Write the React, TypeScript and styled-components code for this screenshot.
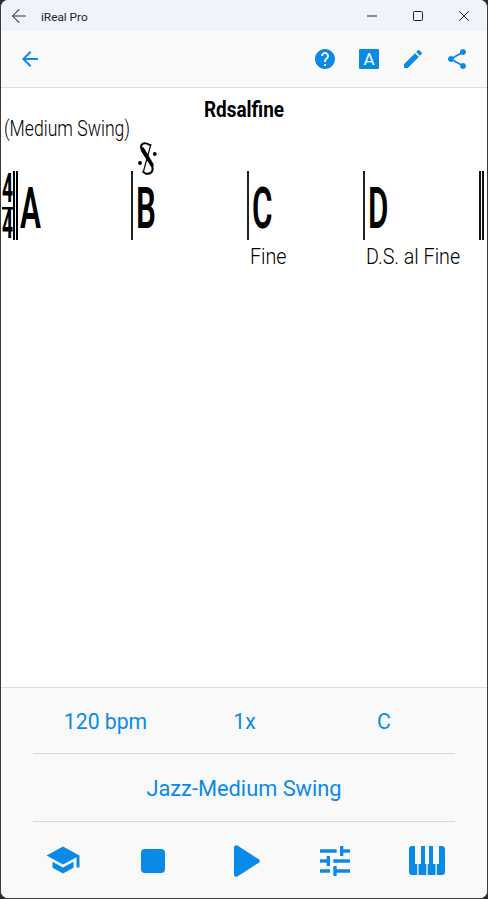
import { createGlobalStyle, styled } from "styled-components";
import { ArrowLeft } from "lucide-react";

const blue = "#0a8ae8";

const GlobalStyle = createGlobalStyle`
  html, body {
    margin: 0;
    height: 100%;
    background: #2b2b2b;
    font-family: Roboto, "Liberation Sans", sans-serif;
  }
`;

const Icon = ({ d, size = 24, className }: { d: string; size?: number; className?: string }) => (
  <svg className={className} width={size} height={size} viewBox="0 0 24 24" fill={blue}>
    <path d={d} />
  </svg>
);

const icons = {
  back: "M20 11H7.83l5.59-5.59L12 4l-8 8 8 8 1.41-1.41L7.83 13H20v-2z",
  help: "M12 2C6.48 2 2 6.48 2 12s4.48 10 10 10 10-4.48 10-10S17.52 2 12 2zm1 17h-2v-2h2v2zm2.07-7.75l-.9.92C13.45 12.9 13 13.5 13 15h-2v-.5c0-1.1.45-2.1 1.17-2.83l1.24-1.26c.37-.36.59-.86.59-1.41 0-1.1-.9-2-2-2s-2 .9-2 2H8c0-2.21 1.79-4 4-4s4 1.79 4 4c0 .88-.36 1.68-.93 2.25z",
  edit: "M3 17.25V21h3.75L17.81 9.94l-3.75-3.75L3 17.25zM20.71 7.04c.39-.39.39-1.02 0-1.41l-2.34-2.34c-.39-.39-1.02-.39-1.41 0l-1.83 1.83 3.75 3.75 1.83-1.83z",
  share: "M18 16.08c-.76 0-1.44.3-1.96.77L8.91 12.7c.05-.23.09-.46.09-.7s-.04-.47-.09-.7l7.05-4.11c.54.5 1.25.81 2.04.81 1.66 0 3-1.34 3-3s-1.34-3-3-3-3 1.34-3 3c0 .24.04.47.09.7L8.04 9.81C7.5 9.31 6.79 9 6 9c-1.66 0-3 1.34-3 3s1.34 3 3 3c.79 0 1.5-.31 2.04-.81l7.12 4.16c-.05.21-.08.43-.08.65 0 1.61 1.31 2.92 2.92 2.92s2.92-1.31 2.92-2.92-1.31-2.92-2.92-2.92z",
  school: "M5 13.18v4L12 21l7-3.82v-4L12 17l-7-3.82zM12 3L1 9l11 6 9-4.91V17h2V9L12 3z",
  tune: "M3 17v2h6v-2H3zM3 5v2h10V5H3zm10 16v-2h8v-2h-8v-2h-2v6h2zM7 9v2H3v2h4v2h2V9H7zm14 4v-2H11v2h10zm-6-4h2V7h4V5h-4V3h-2v6z",
};

export default function App() {
  return (
    <>
      <GlobalStyle />
      <Window>
        <TitleBar>
          <TitleLeft>
            <ArrowLeft size={22} strokeWidth={1.1} color="#333" />
            <TitleText>iReal Pro</TitleText>
          </TitleLeft>
          <WindowControls>
            <WinButton>
              <svg width="10" height="10" viewBox="0 0 10 10">
                <path d="M0 5h10" stroke="#222" />
              </svg>
            </WinButton>
            <WinButton>
              <svg width="10" height="10" viewBox="0 0 10 10">
                <rect x="0.5" y="0.5" width="9" height="9" rx="1" fill="none" stroke="#222" />
              </svg>
            </WinButton>
            <WinButton>
              <svg width="10" height="10" viewBox="0 0 10 10">
                <path d="M0 0l10 10M10 0L0 10" stroke="#222" />
              </svg>
            </WinButton>
          </WindowControls>
        </TitleBar>

        <Toolbar>
          <Icon d={icons.back} />
          <ToolbarActions>
            <Icon d={icons.help} />
            <LetterBadge>A</LetterBadge>
            <Icon d={icons.edit} />
            <Icon d={icons.share} />
          </ToolbarActions>
        </Toolbar>

        <Score>
          <SongTitle>
            <Narrow $scale={0.86}>Rdsalfine</Narrow>
          </SongTitle>
          <StyleName>
            <Narrow $scale={0.8}>(Medium Swing)</Narrow>
          </StyleName>
          <Staff>
            <TimeSignature>
              <span>4</span>
              <span>4</span>
            </TimeSignature>
            <Measure $double>
              <MeasureBar $double>
                <Chord>A</Chord>
              </MeasureBar>
            </Measure>
            <Measure>
              <MeasureBar>
                <Segno viewBox="0 0 19 33">
                  <path
                    d="M12 3.500C10 1 5 .5 3.500 3 2 6 4 9 6 12L13 22C15 25.500 15.500 29 12.500 31 9.500 32.500 6 32 5 29"
                    fill="none"
                    stroke="#000"
                    strokeWidth="2"
                  />
                  <path d="M4.500 7L14 23" stroke="#000" strokeWidth="3.500" strokeLinecap="round" />
                  <path d="M13 2L5 31" stroke="#000" strokeWidth="1.200" />
                  <circle cx="16.800" cy="12" r="1.900" />
                  <circle cx="2" cy="21" r="1.900" />
                </Segno>
                <Chord>B</Chord>
              </MeasureBar>
            </Measure>
            <Measure>
              <MeasureBar>
                <Chord>C</Chord>
              </MeasureBar>
              <BarNote>
                <Narrow $scale={0.875}>Fine</Narrow>
              </BarNote>
            </Measure>
            <Measure>
              <MeasureBar>
                <Chord>D</Chord>
              </MeasureBar>
              <BarNote>
                <Narrow $scale={0.875}>D.S. al Fine</Narrow>
              </BarNote>
            </Measure>
            <EndBar />
          </Staff>
        </Score>

        <Panel>
          <SettingsRow>
            <SettingCell>120 bpm</SettingCell>
            <SettingCell>1x</SettingCell>
            <KeyCell>C</KeyCell>
          </SettingsRow>
          <StyleRow>Jazz-Medium Swing</StyleRow>
          <Transport>
            <SchoolIcon d={icons.school} size={36} />
            <StopButton />
            <PlayIcon width="26" height="32" viewBox="0 0 26 32" fill={blue}>
              <path d="M0 2.5C0 .6 1.8-.4 3.4.6l21.4 13.6c1.3.8 1.3 2.8 0 3.6L3.4 31.4C1.8 32.4 0 31.4 0 29.5z" />
            </PlayIcon>
            <TuneIcon d={icons.tune} size={40} />
            <svg width="36" height="29" viewBox="0 0 36 29" fill={blue}>
              <path d="M3 0h3v18h2.2V29H3c-1.7 0-3-1.3-3-3V3c0-1.700 1.300-3 3-3zM9.500 29V18H12V0h4v18h1.300V29zM18.700 29V18H20V0h4v18h2.500V29zM27.800 29V18H30V0h3c1.700 0 3 1.300 3 3v23c0 1.700-1.300 3-3 3z" />
            </svg>
          </Transport>
        </Panel>
      </Window>
    </>
  );
}

const Window = styled.div`
  box-sizing: border-box;
  width: 488px;
  height: 899px;
  border: solid #3a3a3a;
  border-width: 0 1px 1px;
  border-radius: 8px;
  overflow: hidden;
  display: flex;
  flex-direction: column;
  background: #fff;
`;

const TitleBar = styled.div`
  height: 31px;
  flex: none;
  display: flex;
  align-items: center;
  justify-content: space-between;
  background: #eff4fb;
`;

const TitleLeft = styled.div`
  display: flex;
  align-items: center;
  gap: 11px;
  padding-left: 7px;
`;

const TitleText = styled.span`
  font-size: 11.8px;
  padding-top: 2px;
  color: #222;
`;

const WindowControls = styled.div`
  display: flex;
`;

const WinButton = styled.div`
  width: 46px;
  height: 30px;
  display: flex;
  align-items: center;
  justify-content: center;
`;

const Toolbar = styled.div`
  height: 57px;
  flex: none;
  box-sizing: border-box;
  display: flex;
  align-items: center;
  justify-content: space-between;
  padding: 0 18px 0 17px;
  background: #fafafa;
  border-bottom: 1px solid #dedede;
`;

const ToolbarActions = styled.div`
  display: flex;
  align-items: center;
  gap: 20px;
`;

const LetterBadge = styled.div`
  width: 20px;
  height: 20px;
  margin: 0 2px;
  border-radius: 1px;
  background: ${blue};
  color: #fff;
  font-size: 17px;
  line-height: 21px;
  text-align: center;
`;

const Score = styled.div`
  flex: 1;
  color: #000;
  background: #fff;
  padding-top: 10px;
`;

const Narrow = styled.span<{ $scale: number }>`
  display: inline-block;
  white-space: nowrap;
  transform: scaleX(${(p) => p.$scale});
  transform-origin: left center;
`;

const SongTitle = styled.div`
  height: 24px;
  padding-left: 203px;
  font-size: 22px;
  font-weight: 700;
  line-height: 24px;
`;

const StyleName = styled.div`
  height: 26px;
  margin-top: -6px;
  padding-left: 3px;
  font-size: 22px;
  font-weight: 300;
  line-height: 26px;
`;

const Staff = styled.div`
  display: flex;
  align-items: flex-start;
  margin-top: 29px;
  padding-left: 1px;
`;

const TimeSignature = styled.div`
  box-sizing: border-box;
  width: 11px;
  height: 69px;
  padding-top: 3px;
  display: flex;
  flex-direction: column;
  justify-content: space-between;
  font-size: 40px;
  font-weight: 700;
  line-height: 30px;
  background: linear-gradient(#000, #000) 0 36px / 100% 2.5px no-repeat;

  span {
    display: block;
    transform: scaleX(0.48);
    transform-origin: left center;
  }
`;

const Measure = styled.div<{ $double?: boolean }>`
  width: ${(p) => (p.$double ? "118px" : "116px")};
`;

const MeasureBar = styled.div<{ $double?: boolean }>`
  position: relative;
  box-sizing: border-box;
  height: 69px;
  padding-left: ${(p) => (p.$double ? "2px" : "3px")};
  border-left: ${(p) => (p.$double ? "5px double #000" : "2px solid #222")};
`;

const Chord = styled.div`
  font-size: 58px;
  font-weight: 600;
  line-height: 75px;
  transform: scaleX(0.54);
  transform-origin: left center;
`;

const Segno = styled.svg`
  position: absolute;
  left: 5px;
  top: -29px;
  width: 19px;
  height: 33px;
`;

const BarNote = styled.div`
  margin-top: 2px;
  padding-left: 3px;
  font-size: 22.5px;
  font-weight: 350;
  line-height: 28px;
`;

const EndBar = styled.div`
  width: 5px;
  height: 69px;
  box-sizing: border-box;
  border-left: 5px double #111;
`;

const Panel = styled.div`
  height: 211px;
  flex: none;
  box-sizing: border-box;
  background: #f9f9f9;
  border-top: 1px solid #dedede;
  padding: 0 32px;
  display: flex;
  flex-direction: column;
`;

const SettingsRow = styled.div`
  height: 66px;
  flex: none;
  box-sizing: border-box;
  padding-top: 1px;
  display: grid;
  grid-template-columns: 145px 133px 1fr;
  align-items: center;
  text-align: center;
  border-bottom: 1px solid #c8dcea;
  font-size: 21.2px;
  color: ${blue};
`;

const SettingCell = styled.div``;

const KeyCell = styled.div`
  padding-left: 2px;
`;

const StyleRow = styled.div`
  height: 68px;
  flex: none;
  box-sizing: border-box;
  padding-top: 1px;
  display: flex;
  align-items: center;
  justify-content: center;
  border-bottom: 1px solid #c8dcea;
  font-size: 21.8px;
  color: ${blue};
`;

const Transport = styled.div`
  flex: 1;
  display: grid;
  grid-template-columns: repeat(5, 91px);
  align-items: center;
  justify-items: center;
  margin-left: -16px;
  padding-top: 1px;
`;

const SchoolIcon = styled(Icon)`
  margin-bottom: 2px;
`;

const StopButton = styled.div`
  width: 24px;
  height: 24px;
  margin-right: 2px;
  border-radius: 4px;
  background: ${blue};
`;

const PlayIcon = styled.svg`
  margin-left: 4px;
`;

const TuneIcon = styled(Icon)`
  margin-right: 2px;
`;
